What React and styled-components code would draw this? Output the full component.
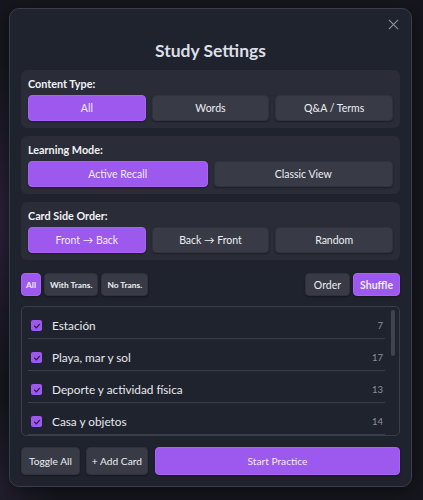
import React, { useState } from 'react';
import styled, { createGlobalStyle } from 'styled-components';

const GlobalStyle = createGlobalStyle`
  html, body {
    margin: 0;
    padding: 0;
    background: #16171e;
    font-family: Lato, 'Open Sans', sans-serif;
  }
`;

const Backdrop = styled.div`
  width: 423px;
  height: 500px;
  box-sizing: border-box;
  padding: 8px 11px 14px 9px;
  background:
    radial-gradient(ellipse 50px 160px at 0px 220px, rgba(70, 45, 95, 0.45), transparent),
    radial-gradient(ellipse 60px 80px at 0px 480px, rgba(60, 45, 80, 0.35), transparent),
    #16171e;
`;

const Modal = styled.div`
  position: relative;
  box-sizing: border-box;
  height: 479px;
  background: #1f232d;
  border: 1px solid #3a3e4a;
  border-radius: 10px;
  padding: 9px 11px 11px 11px;
  display: flex;
  flex-direction: column;
  box-shadow: 0 4px 20px rgba(0, 0, 0, 0.5);
`;

const CloseButton = styled.button`
  position: absolute;
  top: 5px;
  right: 8px;
  width: 20px;
  height: 20px;
  padding: 0;
  border: none;
  background: none;
  color: #8a8f9c;
  display: flex;
  align-items: center;
  justify-content: center;
`;

const Title = styled.h2`
  margin: 21px 0 7px;
  text-align: center;
  color: #dcdfe6;
  font-size: 17.5px;
  font-weight: 700;
  line-height: 24px;
`;

const Section = styled.div`
  background: #2a2d37;
  border-radius: 6px;
  padding: 7px;
  margin-bottom: 8px;
`;

const Label = styled.div`
  color: #f1f2f5;
  font-size: 10.8px;
  font-weight: 700;
  line-height: 13px;
  margin: 0 0 5px 0;
`;

const ButtonRow = styled.div`
  display: flex;
  gap: 6px;
`;

const Option = styled.button`
  flex: 1;
  height: 26px;
  border-radius: 4px;
  border: 1px solid ${(p) => (p.$active ? '#a863f5' : '#30333d')};
  background: ${(p) => (p.$active ? '#9d58ee' : '#383b46')};
  color: #eceef2;
  font-family: inherit;
  font-size: 10.5px;
  box-shadow: 0 1px 2px rgba(0, 0, 0, 0.35);
`;

const Toolbar = styled.div`
  display: flex;
  align-items: center;
  gap: 3px;
  margin: 5px 0 10px;
`;

const Chip = styled.button`
  height: 23px;
  padding: 0 ${(p) => p.$pad || 4}px;
  border-radius: 4px;
  border: 1px solid ${(p) => (p.$active ? '#a863f5' : '#2f323b')};
  background: ${(p) => (p.$active ? '#9d58ee' : '#383b46')};
  color: #eceef2;
  font-family: inherit;
  font-size: ${(p) => p.$size || 8.4}px;
  font-weight: ${(p) => p.$weight || 700};
  box-shadow: 0 1px 2px rgba(0, 0, 0, 0.35);
`;

const Spacer = styled.div`
  flex: 1;
`;

const ListBox = styled.div`
  position: relative;
  height: 130px;
  box-sizing: border-box;
  border: 1px solid #3a3e4a;
  border-radius: 5px;
  padding: 0 14px 0 6px;
  overflow: hidden;
`;

const Scrollbar = styled.div`
  position: absolute;
  top: 3px;
  right: 4px;
  width: 4px;
  height: 46px;
  border-radius: 2px;
  background: #3f434e;
`;

const Row = styled.div`
  display: flex;
  align-items: center;
  box-sizing: border-box;
  height: 32px;
  padding: 6px 0 0 3px;
  border-bottom: 1px solid #3a3e48;
`;

const Check = styled.span`
  width: 11px;
  height: 11px;
  border-radius: 2px;
  background: #9d58ee;
  display: flex;
  align-items: center;
  justify-content: center;
  margin-right: 10px;
`;

const Name = styled.span`
  flex: 1;
  color: #e7e9ee;
  font-size: 11.8px;
`;

const Count = styled.span`
  color: #8d919c;
  font-size: 9.5px;
  margin-right: 2px;
`;

const Footer = styled.div`
  display: flex;
  gap: 6px;
  margin-top: auto;
`;

const FooterButton = styled.button`
  height: 28px;
  padding: 0 ${(p) => p.$pad || 7}px;
  flex: ${(p) => (p.$grow ? 1 : 'none')};
  margin-left: ${(p) => (p.$grow ? 1 : 0)}px;
  border-radius: 4px;
  border: 1px solid ${(p) => (p.$primary ? '#a863f5' : '#30333d')};
  background: ${(p) => (p.$primary ? '#9d58ee' : '#383b46')};
  color: #eceef2;
  font-family: inherit;
  font-size: 10.2px;
  box-shadow: 0 1px 2px rgba(0, 0, 0, 0.35);
`;

const decks = [
  { name: 'Estación', count: 7 },
  { name: 'Playa, mar y sol', count: 17 },
  { name: 'Deporte y actividad física', count: 13 },
  { name: 'Casa y objetos', count: 14 },
];

const CheckIcon = () => (
  <svg width="8" height="8" viewBox="0 0 10 10">
    <path d="M2 5.2 L4.2 7.3 L8 3" fill="none" stroke="#1f232d" strokeWidth="1.6" strokeLinecap="round" strokeLinejoin="round" />
  </svg>
);

export default function App() {
  const [content, setContent] = useState('All');
  const [mode, setMode] = useState('Active Recall');
  const [side, setSide] = useState('Front → Back');
  const [filter, setFilter] = useState('All');
  const [order, setOrder] = useState('Shuffle');

  return (
    <Backdrop>
      <GlobalStyle />
      <Modal>
        <CloseButton>
          <svg width="11" height="11" viewBox="0 0 12 12">
            <path d="M1 1 L11 11 M11 1 L1 11" stroke="currentColor" strokeWidth="1.3" />
          </svg>
        </CloseButton>
        <Title>Study Settings</Title>

        <Section>
          <Label>Content Type:</Label>
          <ButtonRow>
            {['All', 'Words', 'Q&A / Terms'].map((o) => (
              <Option key={o} $active={content === o} onClick={() => setContent(o)}>{o}</Option>
            ))}
          </ButtonRow>
        </Section>

        <Section>
          <Label>Learning Mode:</Label>
          <ButtonRow>
            {['Active Recall', 'Classic View'].map((o) => (
              <Option key={o} $active={mode === o} onClick={() => setMode(o)}>{o}</Option>
            ))}
          </ButtonRow>
        </Section>

        <Section>
          <Label>Card Side Order:</Label>
          <ButtonRow>
            {['Front → Back', 'Back → Front', 'Random'].map((o) => (
              <Option key={o} $active={side === o} onClick={() => setSide(o)}>{o}</Option>
            ))}
          </ButtonRow>
        </Section>

        <Toolbar>
          {['All', 'With Trans.', 'No Trans.'].map((o) => (
            <Chip key={o} $pad={o === 'All' ? 4 : 5} $active={filter === o} onClick={() => setFilter(o)}>{o}</Chip>
          ))}
          <Spacer />
          {['Order', 'Shuffle'].map((o) => (
            <Chip key={o} $pad={o === 'Order' ? 8 : 6} $size={10.5} $weight={order === o ? 700 : 400} $active={order === o} onClick={() => setOrder(o)}>{o}</Chip>
          ))}
        </Toolbar>

        <ListBox>
          {decks.map((d) => (
            <Row key={d.name}>
              <Check><CheckIcon /></Check>
              <Name>{d.name}</Name>
              <Count>{d.count}</Count>
            </Row>
          ))}
          <Scrollbar />
        </ListBox>

        <Footer>
          <FooterButton>Toggle All</FooterButton>
          <FooterButton $pad={5}>+ Add Card</FooterButton>
          <FooterButton $primary $grow>Start Practice</FooterButton>
        </Footer>
      </Modal>
    </Backdrop>
  );
}
